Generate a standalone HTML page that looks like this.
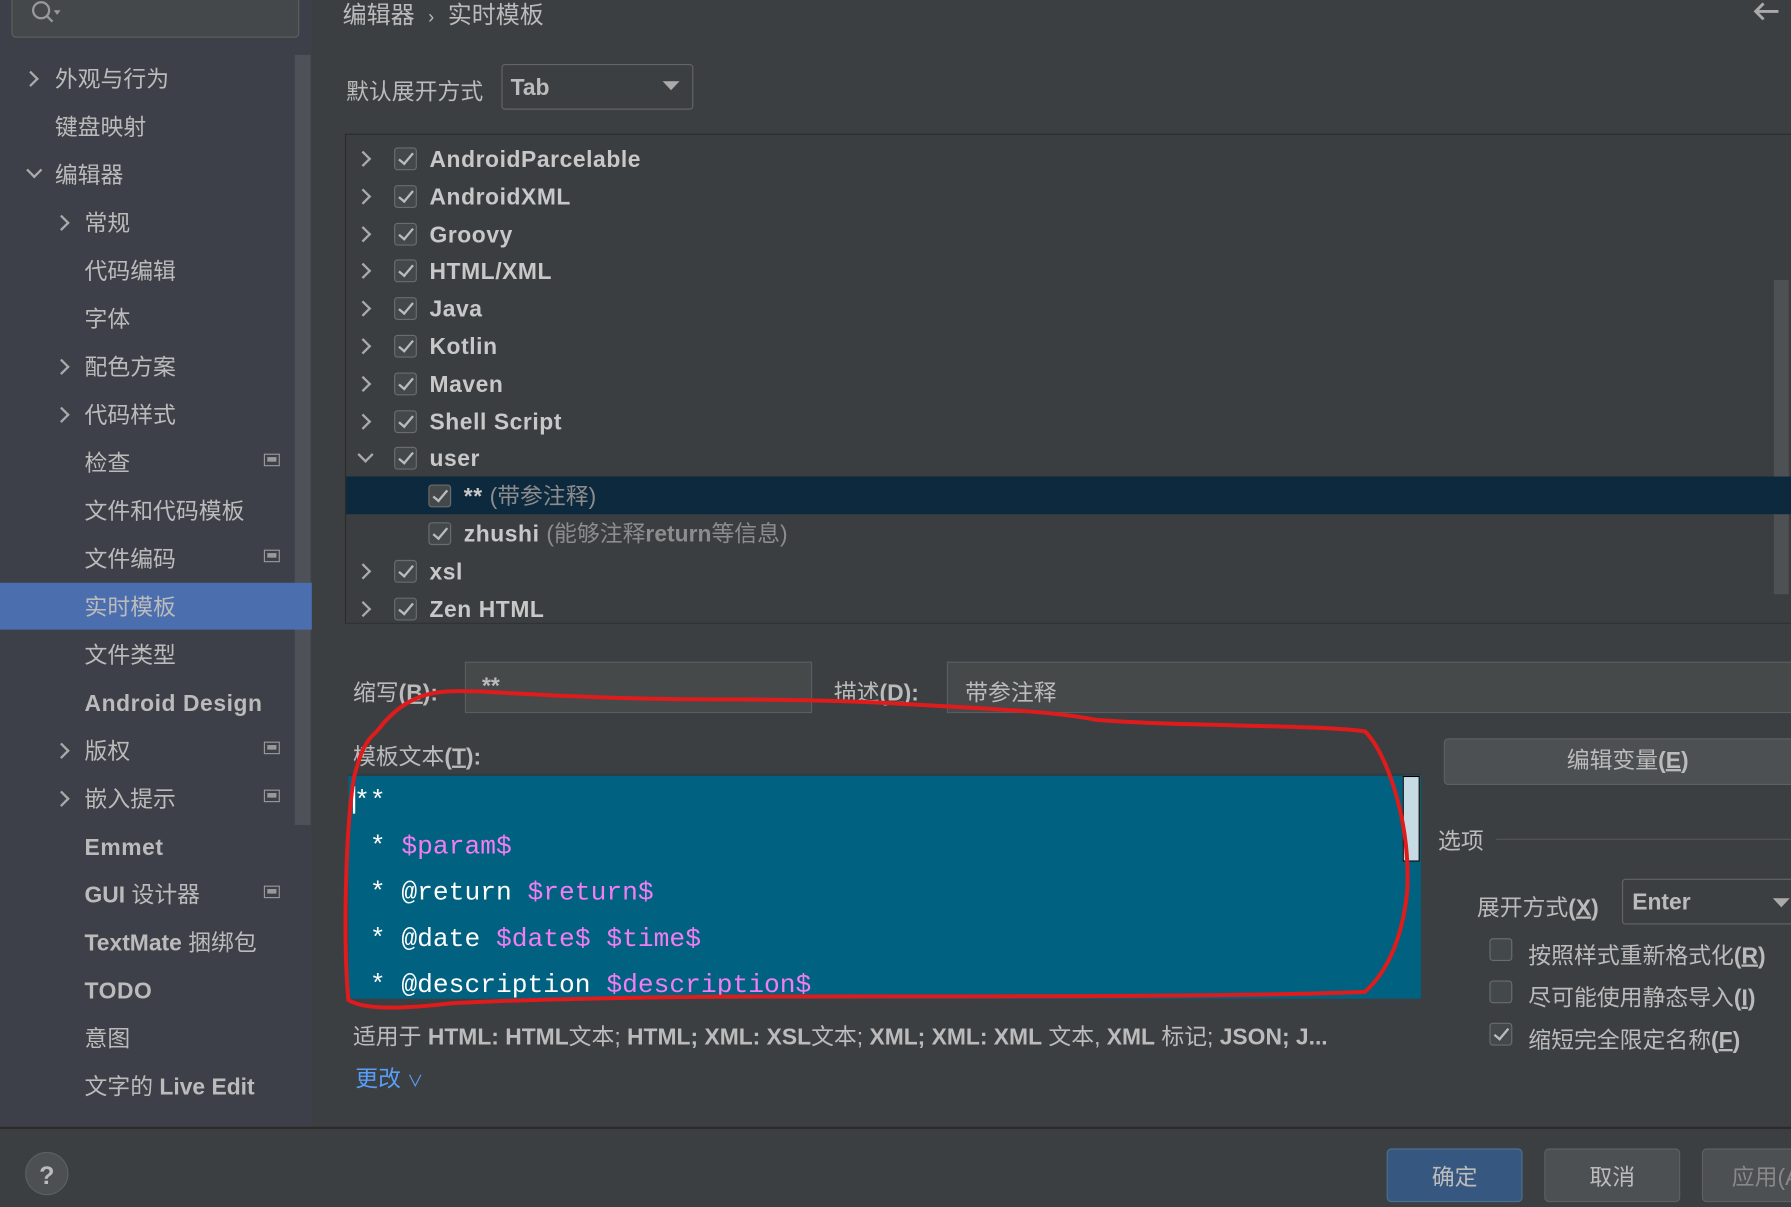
<!DOCTYPE html><html><head><meta charset="utf-8"><style>
html,body{margin:0;padding:0;width:1791px;height:1177px;overflow:hidden;background:#3c3f41}
#w{position:absolute;left:0;top:0;width:1568px;height:1030px;transform:scale(1.14222,1.14272);transform-origin:0 0;font-family:"Liberation Sans","Noto Sans CJK SC",sans-serif;color:#bbbbbb;font-size:20px}
.a{position:absolute;white-space:nowrap}
.sb{position:absolute;left:0;top:0;width:273px;height:987px;background:#3d4048}
.si{position:absolute;line-height:42px;height:42px;font-size:20px;margin-top:2px}
.chev{position:absolute;width:8px;height:8px;border-right:2px solid #aaa;border-bottom:2px solid #aaa}
.r{transform:rotate(-45deg)}.d{transform:rotate(45deg)}
.cb{position:absolute;width:18px;height:18px;border:1.5px solid #6b6b6b;border-radius:3px;background:#43494a}
.cb.k::after{content:"";position:absolute;left:6px;top:1px;width:5px;height:11px;border-right:2px solid #bbb;border-bottom:2px solid #bbb;transform:rotate(40deg)}
.ti{position:absolute;font-weight:bold;font-size:20px;line-height:33px;color:#c8c8c8;letter-spacing:0.5px;margin-top:2px}
.ico{position:absolute;width:12px;height:9px;border:1.5px solid #999;}
.ico::after{content:"";position:absolute;left:2px;top:2px;width:8px;height:4px;background:#999}
.mono{font-family:"Liberation Mono","DejaVu Sans Mono",monospace;font-size:23px;color:#fff;white-space:pre}
.p{color:#f27cf2}
.btn{position:absolute;border:1.5px solid #5e6060;border-radius:4px;background:#4c5052;text-align:center}
u{text-decoration:underline}
</style></head><body><div id="w">
<div class="sb"></div>
<div style="position:absolute;left:10px;top:-4px;width:250px;height:35px;border:1.5px solid #5e6060;border-radius:4px;background:#45484b"></div>
<svg class="a" style="left:26px;top:0" width="28" height="24"><circle cx="10" cy="9" r="7" stroke="#999" stroke-width="2" fill="none"/><line x1="15" y1="14" x2="20" y2="19" stroke="#999" stroke-width="2"/><path d="M21 9 L27 9 L24 13Z" fill="#999"/></svg>
<div style="position:absolute;left:258px;top:48px;width:14px;height:674px;background:#4e5158"></div>
<div style="position:absolute;left:0;top:510px;width:273px;height:41px;background:#4b6eaf"></div>
<div class="chev r" style="left:22px;top:64px"></div><div class="si" style="left:48px;top:47px">外观与行为</div>
<div class="si" style="left:48px;top:89px">键盘映射</div>
<div class="chev d" style="left:25px;top:144px"></div><div class="si" style="left:48px;top:131px">编辑器</div>
<div class="chev r" style="left:49px;top:190px"></div><div class="si" style="left:74px;top:173px">常规</div>
<div class="si" style="left:74px;top:215px">代码编辑</div>
<div class="si" style="left:74px;top:257px">字体</div>
<div class="chev r" style="left:49px;top:316px"></div><div class="si" style="left:74px;top:299px">配色方案</div>
<div class="chev r" style="left:49px;top:358px"></div><div class="si" style="left:74px;top:341px">代码样式</div>
<div class="si" style="left:74px;top:383px">检查</div><div class="ico" style="left:231px;top:397px"></div>
<div class="si" style="left:74px;top:425px">文件和代码模板</div>
<div class="si" style="left:74px;top:467px">文件编码</div><div class="ico" style="left:231px;top:481px"></div>
<div class="si" style="left:74px;top:509px">实时模板</div>
<div class="si" style="left:74px;top:551px">文件类型</div>
<div class="si" style="left:74px;top:593px;font-weight:bold;width:172px;overflow:hidden;letter-spacing:0.5px">Android Design T</div>
<div class="chev r" style="left:49px;top:652px"></div><div class="si" style="left:74px;top:635px">版权</div><div class="ico" style="left:231px;top:649px"></div>
<div class="chev r" style="left:49px;top:694px"></div><div class="si" style="left:74px;top:677px">嵌入提示</div><div class="ico" style="left:231px;top:691px"></div>
<div class="si" style="left:74px;top:719px;font-weight:bold;letter-spacing:0.5px">Emmet</div>
<div class="si" style="left:74px;top:761px"><b>GUI</b> 设计器</div><div class="ico" style="left:231px;top:775px"></div>
<div class="si" style="left:74px;top:803px"><b>TextMate</b> 捆绑包</div>
<div class="si" style="left:74px;top:845px;font-weight:bold;letter-spacing:0.5px">TODO</div>
<div class="si" style="left:74px;top:887px">意图</div>
<div class="si" style="left:74px;top:929px">文字的 <b>Live Edit</b></div>
<div style="position:absolute;left:0;top:986px;width:1568px;height:2px;background:#2b2b2b"></div>
<div style="position:absolute;left:0;top:988px;width:1568px;height:42px;background:#3c3f41"></div>
<div style="position:absolute;left:22px;top:1008px;width:36px;height:36px;border:1.5px solid #5e6060;border-radius:50%;background:#4c5052;text-align:center;font-size:22px;line-height:40px;font-weight:bold">?</div>
<div class="btn" style="left:1214px;top:1005px;width:117px;height:45px;background:#365880;border-color:#4c708c;line-height:50px">确定</div>
<div class="btn" style="left:1352px;top:1005px;width:117px;height:45px;line-height:50px">取消</div>
<div class="btn" style="left:1490px;top:1005px;width:117px;height:45px;line-height:50px;color:#888">应用(A)</div>

<div class="a" style="left:300px;top:-3px;font-size:21px">编辑器 <span style="font-size:16px;margin:0 6px">›</span> 实时模板</div>
<svg class="a" style="left:1535px;top:2px" width="24" height="16"><path d="M2 8 H22 M9 1 L2 8 L9 15" stroke="#aaa" stroke-width="2.5" fill="none"/></svg>
<div class="a" style="left:303px;top:64px">默认展开方式</div>
<div style="position:absolute;left:439px;top:56px;width:166px;height:38px;border:1.5px solid #646464;border-radius:3px;background:#3c3f41"></div>
<div class="a" style="left:447px;top:66px;font-weight:bold">Tab</div>
<svg class="a" style="left:580px;top:71px" width="16" height="9"><path d="M0 0H15L7.5 8Z" fill="#aaa"/></svg>

<div style="position:absolute;left:302px;top:117px;width:1266px;height:427px;border-top:1.5px solid #2b2b2b;border-left:1.5px solid #2b2b2b;border-bottom:1.5px solid #323232;background:#3b3e41"></div>
<div style="position:absolute;left:1553px;top:245px;width:13px;height:275px;background:#4e5154"></div>
<div style="position:absolute;left:303px;top:417px;width:1265px;height:33px;background:#0d293e"></div>
<div id="tree"></div>

<div class="a" style="left:309px;top:590px">缩写<b>(<u>B</u>):</b></div>
<div style="position:absolute;left:407px;top:579px;width:302px;height:43px;border:1.5px solid #5a5d5f;background:#45494a"></div>
<div class="a" style="left:422px;top:590px;font-weight:bold">**</div>
<div class="a" style="left:730px;top:590px">描述<b>(<u>D</u>):</b></div>
<div style="position:absolute;left:829px;top:579px;width:745px;height:43px;border:1.5px solid #5a5d5f;background:#45494a"></div>
<div class="a" style="left:845px;top:590px">带参注释</div>
<div class="a" style="left:309px;top:646px">模板文本<b>(<u>T</u>):</b></div>
<div style="position:absolute;left:305px;top:677px;width:939px;height:195px;background:#006280;border-top:2px solid #2f3b40"></div>
<div style="position:absolute;left:1228px;top:679px;width:13px;height:73px;background:#c6dbe3;border:1.5px solid #000"></div>
<div style="position:absolute;left:309px;top:688px;width:2px;height:24px;background:#fff"></div>
<div class="a mono" style="left:310px;top:688px">**</div>
<div class="a mono" style="left:310px;top:728px"> * <span class="p">$param$</span></div>
<div class="a mono" style="left:310px;top:768px"> * @return <span class="p">$return$</span></div>
<div class="a mono" style="left:310px;top:809px"> * @date <span class="p">$date$</span> <span class="p">$time$</span></div>
<div class="a mono" style="left:310px;top:849px"> * @description <span class="p">$description$</span></div>
<div class="a" style="left:309px;top:891px">适用于 <b>HTML: HTML</b>文本; <b>HTML; XML: XSL</b>文本; <b>XML; XML: XML</b> 文本, <b>XML</b> 标记; <b>JSON; J...</b></div>
<div class="a" style="left:311px;top:928px;color:#589df6">更改 <span style="font-size:14px">∨</span></div>

<div class="btn" style="left:1264px;top:646px;width:320px;height:39px;line-height:39px">编辑变量<b>(<u>E</u>)</b></div>
<div class="a" style="left:1259px;top:720px">选项</div>
<div style="position:absolute;left:1310px;top:734px;width:258px;height:1px;background:#555"></div>
<div class="a" style="left:1293px;top:778px">展开方式<b>(<u>X</u>)</b></div>
<div style="position:absolute;left:1420px;top:769px;width:160px;height:38px;border:1.5px solid #646464;border-radius:3px"></div>
<div class="a" style="left:1429px;top:779px;font-weight:bold">Enter</div>
<svg class="a" style="left:1552px;top:786px" width="16" height="9"><path d="M0 0H15L7.5 8Z" fill="#aaa"/></svg>
<div class="cb" style="left:1304px;top:821px"></div><div class="a" style="left:1338px;top:820px">按照样式重新格式化<b>(<u>R</u>)</b></div>
<div class="cb" style="left:1304px;top:858px"></div><div class="a" style="left:1338px;top:857px">尽可能使用静态导入<b>(<u>I</u>)</b></div>
<div class="cb k" style="left:1304px;top:895px"></div><div class="a" style="left:1338px;top:894px">缩短完全限定名称<b>(<u>F</u>)</b></div>

<svg class="a" style="left:0;top:0" width="1568" height="1030"><path d="M330 640 C360 600 390 605 420 605 C500 610 560 612 620 612 C700 612 760 614 790 616 C860 620 920 622 960 630 C1040 636 1150 634 1195 640 C1215 660 1235 720 1232 780 C1228 820 1215 850 1195 868 C1100 872 900 872 700 872 C560 872 450 875 395 878 C360 882 320 885 305 875 C300 820 303 720 310 680 C315 660 320 648 330 640" stroke="#e01b1b" stroke-width="3.5" fill="none"/></svg>
</div>
<script>
var items=[["AndroidParcelable",0],["AndroidXML",0],["Groovy",0],["HTML/XML",0],["Java",0],["Kotlin",0],["Maven",0],["Shell Script",0],["user",2],["** <span style='font-weight:normal;color:#8c8c8c;letter-spacing:0'>(带参注释)</span>",1],["zhushi <span style='font-weight:normal;color:#8c8c8c;letter-spacing:0'>(能够注释<b>return</b>等信息)</span>",1],["xsl",0],["Zen HTML",0]];
var h="";
items.forEach(function(it,i){var y=123+i*32.8;
if(it[1]==0)h+='<div class="chev r" style="left:313px;top:'+(y+11)+'px"></div>';
if(it[1]==2)h+='<div class="chev d" style="left:315px;top:'+(y+8)+'px"></div>';
var cx=it[1]==1?375:345;
h+='<div class="cb k" style="left:'+cx+'px;top:'+(y+6)+'px"></div><div class="ti" style="left:'+(cx+31)+'px;top:'+(y-1)+'px">'+it[0]+'</div>';});
document.getElementById("tree").outerHTML=h;
</script>
</body></html>
